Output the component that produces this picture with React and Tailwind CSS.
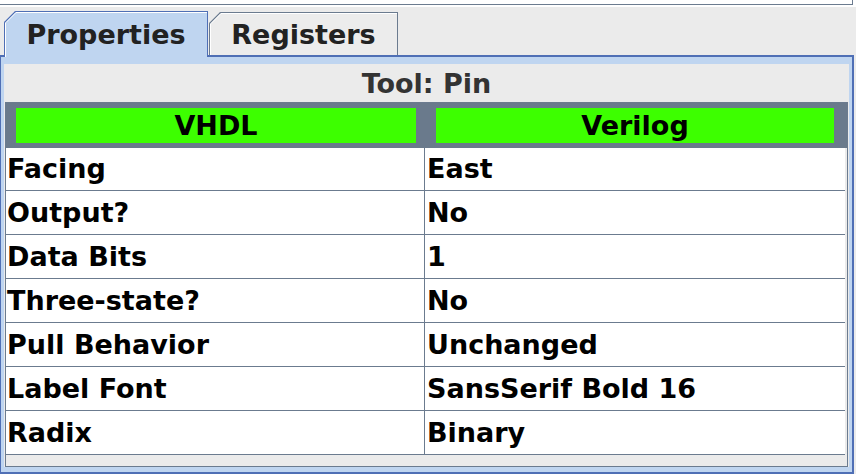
import React from "react";

const rows = [
  ["Facing", "East"],
  ["Output?", "No"],
  ["Data Bits", "1"],
  ["Three-state?", "No"],
  ["Pull Behavior", "Unchanged"],
  ["Label Font", "SansSerif Bold 16"],
  ["Radix", "Binary"],
];

function Corner({ stroke, fill }) {
  return (
    <svg
      className="absolute left-[-1px] top-[-1px]"
      width="12"
      height="12"
      viewBox="0 0 12 12"
    >
      <polygon points="0,0 11.5,0 0,11.5" fill="#ebebeb" />
      <line x1="0.5" y1="11.5" x2="11.5" y2="0.5" stroke={stroke} strokeWidth="1.2" />
      <line x1="2" y1="11.5" x2="11.5" y2="2" stroke={fill} strokeWidth="1" />
    </svg>
  );
}

export default function App() {
  return (
    <div
      className="w-[856px] h-[474px] bg-[#ebebeb] overflow-hidden flex flex-col"
      style={{ fontFamily: '"DejaVu Sans", Verdana, sans-serif' }}
    >
      {/* top strip */}
      <div className="h-[7px] bg-white shrink-0">
        <div className="h-[5px] w-[853px] border-b border-r border-[#6b7b8f]" />
      </div>

      {/* tabs */}
      <div className="h-[48px] shrink-0 flex items-start pl-[4px] gap-[1px] relative z-10">
        <div className="relative mt-[4px] w-[204px] h-[46px] bg-[#bfd5f0] border-t border-l border-r border-[#4f6fb5] shadow-[inset_1px_1px_0_#ffffff] flex justify-center pt-[8px]">
          <Corner stroke="#4f6fb5" fill="#ffffff" />
          <span className="text-[27px] font-bold text-[#222222] leading-[30px]">Properties</span>
        </div>
        <div className="relative mt-[5px] w-[189px] h-[43px] bg-[#ececec] border-t border-l border-r border-[#6b7b8f] shadow-[inset_1px_1px_0_#ffffff] flex justify-center pt-[7px]">
          <Corner stroke="#6b7b8f" fill="#ffffff" />
          <span className="text-[27px] font-bold text-[#222222] leading-[30px]">Registers</span>
        </div>
      </div>

      {/* panel */}
      <div className="w-[854px] h-[419px] shrink-0 border-t-2 border-l border-r-2 border-b-2 border-[#4f6fb5] bg-[#bfd5f0] pt-[7px] pl-[3px] pr-[3px] pb-[5px]">
        <div className="h-[403px] bg-[#ebebeb] flex flex-col">
          <div className="h-[38px] shrink-0 flex items-center justify-center">
            <span className="text-[27px] font-bold text-[#333333] leading-[30px] pt-[1px]">Tool: Pin</span>
          </div>
          <div className="ml-[1px] w-[843px] h-[365px] border border-[#6b7b8f] bg-[#ebebeb] flex flex-col">
            {/* header */}
            <div className="h-[45px] shrink-0 bg-[#6a7a8c] flex">
              <div className="w-[420px] px-[10px] py-[5px] flex">
                <div className="flex-1 bg-[#3dff00] flex items-center justify-center text-[27px] font-bold text-black leading-[30px]">
                  VHDL
                </div>
              </div>
              <div className="flex-1 px-[10px] py-[5px] flex">
                <div className="flex-1 bg-[#3dff00] flex items-center justify-center text-[27px] font-bold text-black leading-[30px] mr-[3px]">
                  Verilog
                </div>
              </div>
            </div>
            {rows.map(([k, v], i) => (
              <div
                key={k}
                className={`${i === 0 ? "h-[43px]" : "h-[44px]"} shrink-0 bg-white border-b border-[#6b7b8f] flex mr-[2px]`}
              >
                <div className="w-[419px] border-r border-[#6b7b8f] pl-[1px] flex items-center text-[27px] font-bold text-black leading-[30px]">
                  {k}
                </div>
                <div className="flex-1 pl-[2px] flex items-center text-[27px] font-bold text-black leading-[30px]">
                  {v}
                </div>
              </div>
            ))}
          </div>
        </div>
      </div>
    </div>
  );
}
